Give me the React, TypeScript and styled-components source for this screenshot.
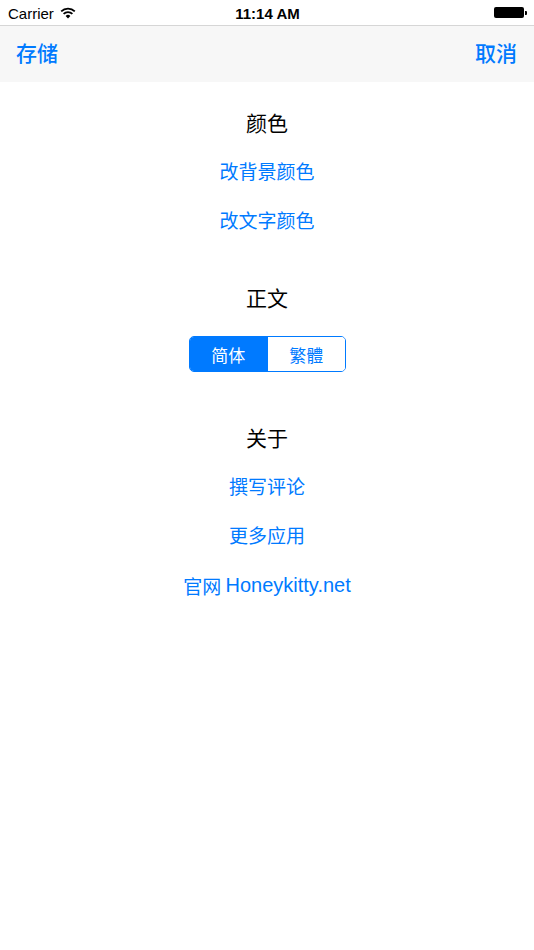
import React from "react";
import styled, { createGlobalStyle } from "styled-components";

const BLUE = "#007aff";
const CJK = `"Noto Sans CJK SC", "Noto Sans", sans-serif`;
const LATIN = `"Liberation Sans", "Noto Sans CJK SC", sans-serif`;

const GlobalStyle = createGlobalStyle`
	html, body {
		margin: 0;
		padding: 0;
		background: #ffffff;
	}
	body {
		font-family: ${CJK};
	}
`;

export default function App() {
	const [script, setScript] = React.useState<"simple" | "traditional">("simple");

	return (
		<>
			<GlobalStyle />
			<Screen>
				<StatusBar>
					<Carrier>
						Carrier
						<svg width="16" height="12" viewBox="0 0 16 12">
							<path d="M8 11.5 L5.6 8.9 A3.4 3.4 0 0 1 10.4 8.9 Z" fill="#000" />
							<path
								d="M3.6 6.9 A6.3 6.3 0 0 1 12.4 6.9"
								stroke="#000"
								strokeWidth="1.8"
								fill="none"
							/>
							<path
								d="M1.2 4.4 A9.6 9.6 0 0 1 14.8 4.4"
								stroke="#000"
								strokeWidth="1.8"
								fill="none"
							/>
						</svg>
					</Carrier>
					<Clock>11:14 AM</Clock>
					<Battery>
						<BatteryBody />
						<BatteryNib />
					</Battery>
				</StatusBar>
				<NavBar>
					<NavButton>存储</NavButton>
					<NavButton>取消</NavButton>
				</NavBar>
				<Content>
					<Section>
						<Heading>颜色</Heading>
						<LinkRow>改背景颜色</LinkRow>
						<LinkRow>改文字颜色</LinkRow>
					</Section>
					<Section $top={29}>
						<Heading>正文</Heading>
						<Segmented>
							<Segment
								$active={script === "simple"}
								onClick={() => setScript("simple")}
							>
								简体
							</Segment>
							<Segment
								$active={script === "traditional"}
								onClick={() => setScript("traditional")}
							>
								繁體
							</Segment>
						</Segmented>
					</Section>
					<Section $top={41}>
						<Heading>关于</Heading>
						<LinkRow>撰写评论</LinkRow>
						<LinkRow>更多应用</LinkRow>
						<LinkRow $nudge={2}>
							官网 <Latin>Honeykitty.net</Latin>
						</LinkRow>
					</Section>
				</Content>
			</Screen>
		</>
	);
}

const Screen = styled.div`
	width: 534px;
	min-height: 950px;
	background: #ffffff;
	display: flex;
	flex-direction: column;
`;

const StatusBar = styled.div`
	height: 25px;
	padding: 0 7px 0 8px;
	display: flex;
	align-items: center;
	justify-content: space-between;
	border-bottom: 1px solid #d6d6d6;
	background: #ffffff;
	font-family: ${LATIN};
	font-size: 15px;
	color: #000;
`;

const Carrier = styled.div`
	width: 120px;
	display: flex;
	align-items: center;
	gap: 6px;
	margin-top: 1px;
`;

const Clock = styled.div`
	font-weight: 600;
	margin-top: 1px;
`;

const Battery = styled.div`
	width: 120px;
	display: flex;
	align-items: center;
	justify-content: flex-end;
`;

const BatteryBody = styled.div`
	width: 30px;
	height: 11px;
	border-radius: 2px;
	background: #000;
`;

const BatteryNib = styled.div`
	width: 2px;
	height: 4px;
	margin-left: 1px;
	border-radius: 0 1px 1px 0;
	background: #000;
`;

const NavBar = styled.div`
	height: 56px;
	box-sizing: border-box;
	padding: 0 17px 4px 16px;
	display: flex;
	align-items: center;
	justify-content: space-between;
	background: #f7f7f7;
`;

const NavButton = styled.button`
	border: none;
	background: none;
	padding: 0;
	font-family: ${CJK};
	font-size: 21px;
	font-weight: 500;
	color: ${BLUE};
	cursor: pointer;
`;

const Content = styled.div`
	padding-top: 16px;
	display: flex;
	flex-direction: column;
	align-items: center;
`;

const Section = styled.section<{ $top?: number }>`
	margin-top: ${(p) => p.$top ?? 0}px;
	display: flex;
	flex-direction: column;
	align-items: center;
	width: 100%;
`;

const Heading = styled.h2`
	margin: 0;
	height: 48px;
	display: flex;
	align-items: center;
	font-family: ${CJK};
	font-size: 21px;
	font-weight: 400;
	color: #000;
`;

const LinkRow = styled.a<{ $nudge?: number }>`
	height: 49px;
	box-sizing: border-box;
	padding-top: ${(p) => (p.$nudge ?? 0) * 2}px;
	display: flex;
	align-items: center;
	white-space: pre;
	font-family: ${CJK};
	font-size: 19px;
	color: ${BLUE};
	text-decoration: none;
	cursor: pointer;
`;

const Latin = styled.span`
	font-family: ${LATIN};
	font-size: 20px;
`;

const Segmented = styled.div`
	margin-top: 15px;
	width: 157px;
	height: 36px;
	box-sizing: border-box;
	border: 1px solid ${BLUE};
	border-radius: 5px;
	overflow: hidden;
	display: grid;
	grid-template-columns: 1fr 1fr;
`;

const Segment = styled.button<{ $active: boolean }>`
	border: none;
	padding: 0;
	font-family: ${CJK};
	font-size: 17px;
	background: ${(p) => (p.$active ? BLUE : "#ffffff")};
	color: ${(p) => (p.$active ? "#ffffff" : BLUE)};
	cursor: pointer;

	& + & {
		border-left: 1px solid ${BLUE};
	}
`;
